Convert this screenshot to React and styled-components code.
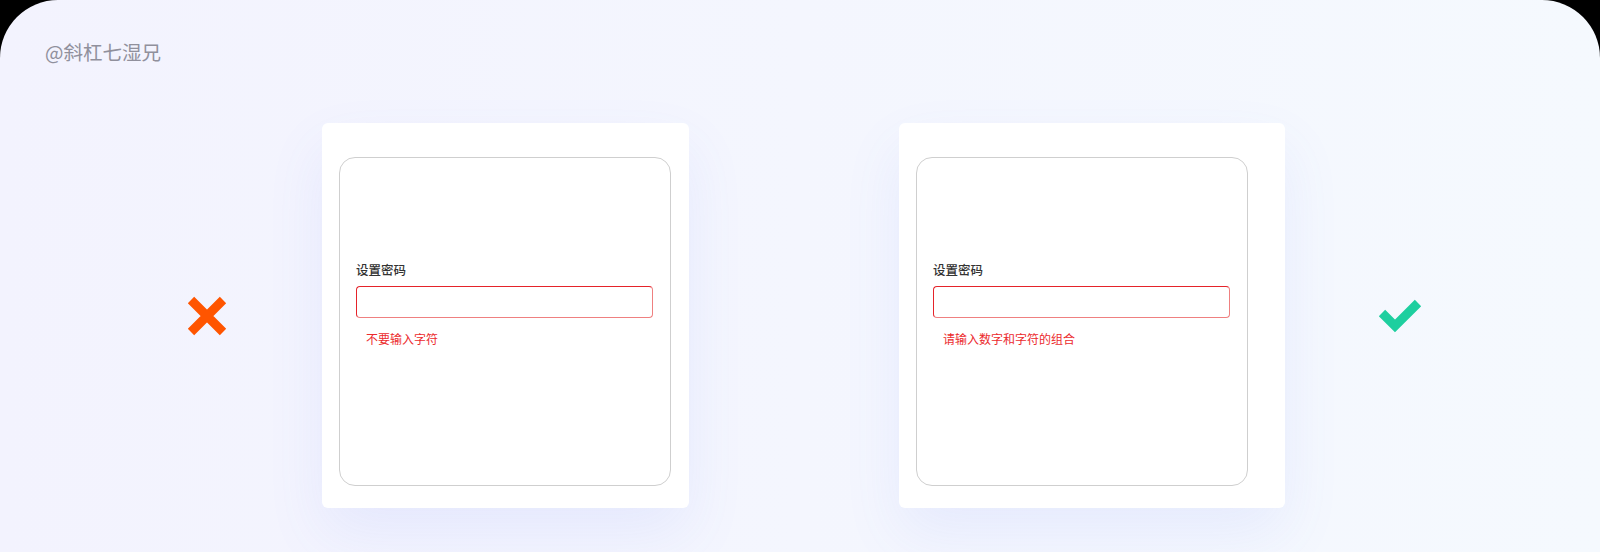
import React from 'react';
import styled, { createGlobalStyle } from 'styled-components';

const GlobalStyle = createGlobalStyle`
  html, body {
    margin: 0;
    padding: 0;
    background: #000;
  }
  body {
    font-family: "Noto Sans CJK SC", "Noto Sans", sans-serif;
  }
`;

const Page = styled.div`
  width: 1600px;
  height: 552px;
  overflow: hidden;
  border-radius: 58px 58px 0 0;
  background: linear-gradient(90deg, #f3f3fe 0%, #f4f6fe 50%, #f5f9fe 100%);
`;

const Watermark = styled.div`
  padding: 39px 0 0 45px;
  font-size: 19.5px;
  line-height: 26px;
  color: #90909c;
`;

const Stage = styled.div`
  display: flex;
  align-items: center;
  margin-top: 58px;
  padding-left: 187px;
`;

const Mark = styled.svg`
  display: block;
  flex: none;
  margin-left: ${({ offset }) => offset || 0}px;
`;

const Card = styled.div`
  flex: none;
  width: ${({ width }) => width}px;
  box-sizing: border-box;
  margin-left: ${({ offset }) => offset || 0}px;
  padding: 34px 0 22px 17px;
  background: #fff;
  border-radius: 6px;
  box-shadow: 0 26px 60px rgba(88, 116, 240, 0.09);
`;

const Phone = styled.div`
  width: 332px;
  height: 329px;
  box-sizing: border-box;
  padding: 103px 16px 0;
  border: 1px solid #cfcfcf;
  border-radius: 16px;
`;

const Label = styled.div`
  font-size: 12.5px;
  line-height: 18px;
  font-weight: 500;
  color: #333;
  margin-bottom: 7px;
`;

const Input = styled.div`
  width: 297px;
  height: 32px;
  box-sizing: border-box;
  border: 1px solid #e5232a;
  border-right-color: #ef8080;
  border-bottom-color: #ef8080;
  border-radius: 4px;
  background: #fff;
`;

const Hint = styled.div`
  margin-top: 12px;
  padding-left: 10px;
  font-size: 12px;
  line-height: 18px;
  color: #ec2a2d;
`;

const PasswordForm = ({ hint, width, offset }) => (
  <Card width={width} offset={offset}>
    <Phone>
      <Label>设置密码</Label>
      <Input />
      <Hint>{hint}</Hint>
    </Phone>
  </Card>
);

export default function App() {
  return (
    <>
      <GlobalStyle />
      <Page>
        <Watermark>@斜杠七湿兄</Watermark>
        <Stage>
          <Mark width="40" height="40" viewBox="0 0 40 40">
            <path d="M4 4 L36 36 M36 4 L4 36" stroke="#ff5500" strokeWidth="9" fill="none" />
          </Mark>
          <PasswordForm hint="不要输入字符" width={367} offset={95} />
          <PasswordForm hint="请输入数字和字符的组合" width={386} offset={210} />
          <Mark width="44" height="34" viewBox="0 0 44 34" offset={93}>
            <polyline points="4,14 17,27 40,4" stroke="#1ecf9f" strokeWidth="9" fill="none" strokeLinejoin="miter" />
          </Mark>
        </Stage>
      </Page>
    </>
  );
}
